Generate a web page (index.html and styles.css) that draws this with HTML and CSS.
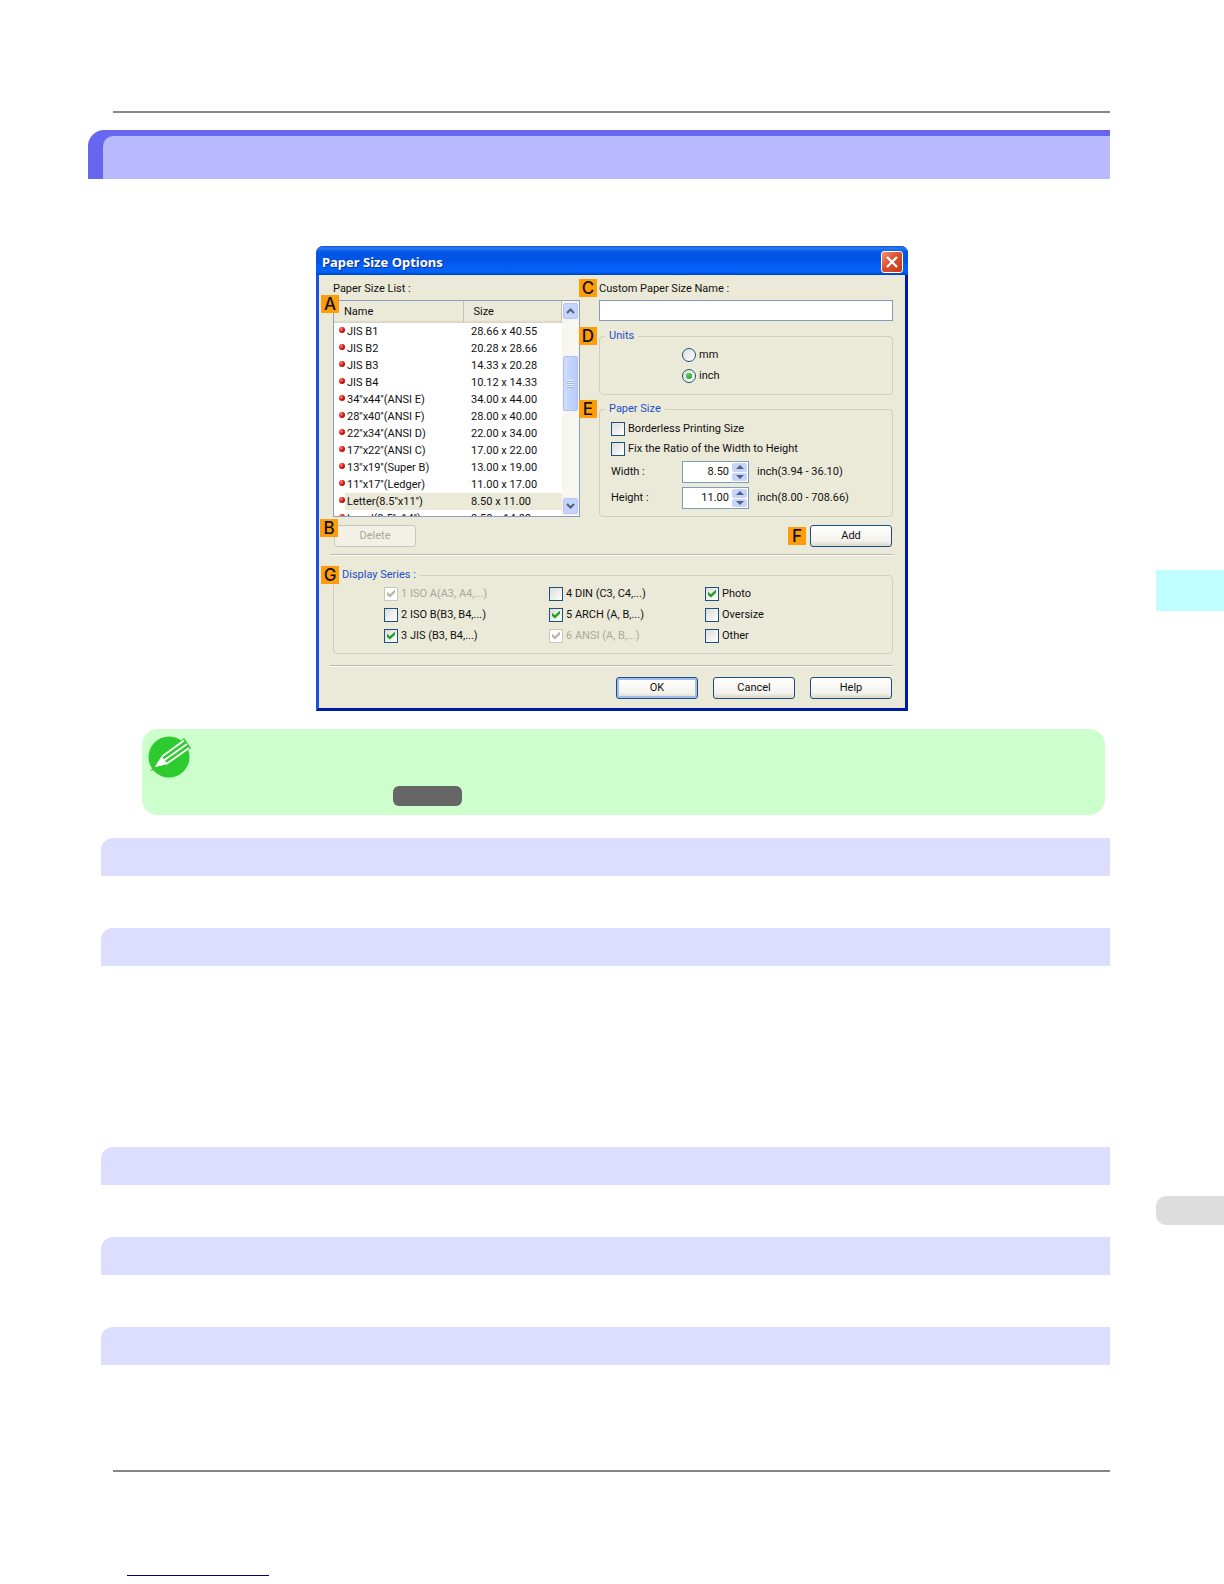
FILE: index.html
```html
<!DOCTYPE html>
<html lang="en">
<head>
<meta charset="utf-8">
<meta name="viewport" content="width=device-width, initial-scale=1">
<title>Paper Size Options</title>
<link rel="stylesheet" href="styles.css">
</head>
<body>
<div class="page">
  <main class="content">
    <hr class="rule">
    <div class="title-bar"><div class="title-inner"></div></div>

    <div class="figure">
      <form class="dialog">
        <header class="caption">
          <h1>Paper Size Options</h1>
          <button type="button" class="close" aria-label="Close">
            <svg viewBox="0 0 20 20" width="20" height="20"><path d="M5 5l10 10M15 5L5 15" stroke="#fff" stroke-width="2.4" fill="none"/></svg>
          </button>
        </header>
        <div class="dialog-body">
          <div class="columns">
            <section class="column">
              <h2 class="label" id="list-label">Paper Size List :</h2>
              <div class="list-box">
                <span class="badge badge-list">A</span>
                <div class="list-view">
                  <table aria-labelledby="list-label">
                    <thead><tr><th>Name</th><th>Size</th></tr></thead>
                    <tbody>
                      <tr><td>JIS B1</td><td>28.66 x 40.55</td></tr>
                      <tr><td>JIS B2</td><td>20.28 x 28.66</td></tr>
                      <tr><td>JIS B3</td><td>14.33 x 20.28</td></tr>
                      <tr><td>JIS B4</td><td>10.12 x 14.33</td></tr>
                      <tr><td>34''x44''(ANSI E)</td><td>34.00 x 44.00</td></tr>
                      <tr><td>28''x40''(ANSI F)</td><td>28.00 x 40.00</td></tr>
                      <tr><td>22''x34''(ANSI D)</td><td>22.00 x 34.00</td></tr>
                      <tr><td>17''x22''(ANSI C)</td><td>17.00 x 22.00</td></tr>
                      <tr><td>13''x19''(Super B)</td><td>13.00 x 19.00</td></tr>
                      <tr><td>11''x17''(Ledger)</td><td>11.00 x 17.00</td></tr>
                      <tr class="selected"><td>Letter(8.5''x11'')</td><td>8.50 x 11.00</td></tr>
                      <tr><td>Legal(8.5''x14'')</td><td>8.50 x 14.00</td></tr>
                    </tbody>
                  </table>
                </div>
                <div class="scrollbar">
                  <button type="button" class="scroll-btn" aria-label="Scroll up"><svg viewBox="0 0 9 6" width="9" height="6"><path d="M1 5l3.500-3.500L8 5" fill="none" stroke="#4d6185" stroke-width="2"/></svg></button>
                  <div class="scroll-thumb"><i></i></div>
                  <button type="button" class="scroll-btn scroll-down" aria-label="Scroll down"><svg viewBox="0 0 9 6" width="9" height="6"><path d="M1 1l3.500 3.500L8 1" fill="none" stroke="#4d6185" stroke-width="2"/></svg></button>
                </div>
              </div>
              <div class="actions">
                <span class="badge badge-list">B</span>
                <button type="button" class="button" disabled>Delete</button>
              </div>
            </section>

            <section class="column">
              <label class="label" for="custom-name"><span class="badge badge-group">C</span>Custom Paper Size Name :</label>
              <input type="text" id="custom-name" class="text-field">
              <fieldset class="group units">
                <legend><span class="badge badge-group">D</span>Units</legend>
                <label class="choice"><input type="radio" name="unit">mm</label>
                <label class="choice"><input type="radio" name="unit" checked>inch</label>
              </fieldset>
              <fieldset class="group paper">
                <legend><span class="badge badge-group">E</span>Paper Size</legend>
                <label class="choice"><input type="checkbox">Borderless Printing Size</label>
                <label class="choice"><input type="checkbox">Fix the Ratio of the Width to Height</label>
                <div class="measure">
                  <label for="width">Width :</label>
                  <span class="spin">
                    <input type="text" id="width" value="8.50">
                    <span class="spin-buttons">
                      <button type="button" aria-label="Increase width"><svg viewBox="0 0 8 4" width="8" height="4"><path d="M0 4l4-4 4 4z" fill="#4d6185"/></svg></button>
                      <button type="button" aria-label="Decrease width"><svg viewBox="0 0 8 4" width="8" height="4"><path d="M0 0l4 4 4-4z" fill="#4d6185"/></svg></button>
                    </span>
                  </span>
                  <span class="range">inch(3.94 - 36.10)</span>
                </div>
                <div class="measure">
                  <label for="height">Height :</label>
                  <span class="spin">
                    <input type="text" id="height" value="11.00">
                    <span class="spin-buttons">
                      <button type="button" aria-label="Increase height"><svg viewBox="0 0 8 4" width="8" height="4"><path d="M0 4l4-4 4 4z" fill="#4d6185"/></svg></button>
                      <button type="button" aria-label="Decrease height"><svg viewBox="0 0 8 4" width="8" height="4"><path d="M0 0l4 4 4-4z" fill="#4d6185"/></svg></button>
                    </span>
                  </span>
                  <span class="range">inch(8.00 - 708.66)</span>
                </div>
              </fieldset>
              <div class="actions actions-end">
                <span class="badge">F</span>
                <button type="button" class="button">Add</button>
              </div>
            </section>
          </div>

          <hr class="divider">
          <fieldset class="group series">
            <legend><span class="badge badge-series">G</span>Display Series :</legend>
            <label class="choice disabled"><input type="checkbox" checked disabled>1 ISO A(A3, A4,...)</label>
            <label class="choice"><input type="checkbox">2 ISO B(B3, B4,...)</label>
            <label class="choice"><input type="checkbox" checked>3 JIS (B3, B4,...)</label>
            <label class="choice"><input type="checkbox">4 DIN (C3, C4,...)</label>
            <label class="choice"><input type="checkbox" checked>5 ARCH (A, B,...)</label>
            <label class="choice disabled"><input type="checkbox" checked disabled>6 ANSI (A, B,...)</label>
            <label class="choice"><input type="checkbox" checked>Photo</label>
            <label class="choice"><input type="checkbox">Oversize</label>
            <label class="choice"><input type="checkbox">Other</label>
          </fieldset>
          <hr class="divider">
          <footer class="dialog-footer">
            <button type="button" class="button default">OK</button>
            <button type="button" class="button">Cancel</button>
            <button type="button" class="button">Help</button>
          </footer>
        </div>
      </form>
    </div>

    <aside class="note">
      <svg class="note-icon" viewBox="0 0 44 44" width="44" height="44">
        <circle cx="21" cy="22" r="20.500" fill="#2ecb2e"/>
        <path d="M2 36L15 21 36 3l7 10L22 31z" fill="#2ecb2e"/>
        <path d="M7 32L13 22l5 7z" fill="#fff"/>
        <path d="M7 32l6-9.500 4.500 7z" fill="#fff"/>
        <path d="M14 21.500L36 5.500M16.500 25L39 9M19 28.500L41 13" stroke="#fff" stroke-width="1.800" fill="none"/>
        <path d="M13.500 22l5.500 7.500" stroke="#fff" stroke-width="1.500"/>
      </svg>
      <div class="reference"></div>
    </aside>

    <div class="section"><div class="section-bar"></div></div>
    <div class="section tall"><div class="section-bar"></div></div>
    <div class="section"><div class="section-bar"></div></div>
    <div class="section"><div class="section-bar"></div></div>
    <div class="section last"><div class="section-bar"></div></div>
    <hr class="rule">
    <a class="footer-link" href="#" aria-label="Back to top"></a>
  </main>

  <div class="side">
    <div class="chapter-tab"></div>
    <div class="page-tab"></div>
  </div>
</div>
</body>
</html>
```
FILE: styles.css
```css
* { box-sizing: border-box; }

body {
  margin: 0;
  background: #fff;
  color: #111;
  font: 11px/16px Roboto, "Liberation Sans", sans-serif;
}

button, input { font: inherit; color: inherit; margin: 0; padding: 0; }
h1, h2, fieldset, legend { margin: 0; padding: 0; border: 0; font: inherit; }

.page {
  display: grid;
  grid-template-columns: minmax(0, 1fr) 68px;
}

.content { padding: 111px 46px 0 88px; }

.rule {
  height: 2px;
  margin: 0 0 0 25px;
  border: 0;
  background: #868686;
}

.title-bar {
  margin-top: 17px;
  padding: 6px 0 0 15px;
  background: #6666ee;
  border-radius: 16px 0 0 0;
}

.title-inner {
  height: 43px;
  background: #b9b9ff;
  border-radius: 10px 0 0 0;
}

.figure { padding: 67px 0 18px 26px; }

/* Dialog window */
.dialog {
  max-width: 592px;
  margin: 0 auto;
  border: solid;
  border-width: 0 3px 3px;
  border-color: #0a3cd8 #001aa8 #001aa8 #1553e0;
  border-radius: 7px 7px 0 0;
  background: #ebe9d8;
}

.caption {
  display: flex;
  align-items: center;
  justify-content: space-between;
  height: 29px;
  margin: 0 -3px;
  padding: 2px 5px 0 6px;
  border-radius: 7px 7px 0 0;
  background: linear-gradient(#0a50d0 0, #2a7bf5 2px, #0358e6 6px, #0054e3 14px, #0362fb 22px, #0261f5 26px, #0042c0 29px);
}

.caption h1 {
  color: #fff;
  font: bold 13px/16px "Noto Sans", "Open Sans", sans-serif;
  text-shadow: 1px 1px 0 #0f2f80;
}

.close {
  display: flex;
  width: 22px;
  height: 22px;
  border: 1px solid #fff;
  border-radius: 3px;
  background: linear-gradient(135deg, #ec9478, #dd5030 45%, #c43a14);
}

.dialog-body { padding: 6px 12px 9px 11px; }

.columns {
  display: grid;
  grid-template-columns: 247fr 294fr;
  gap: 19px;
  padding-left: 3px;
}

.column { min-width: 0; }

.label {
  display: block;
  position: relative;
  margin-bottom: 3px;
}

.badge {
  width: 18px;
  height: 18px;
  background: #ff9c09;
  color: #111;
  font: 500 17px/18px Inter, "Liberation Sans", sans-serif;
  text-align: center;
}

.badge-list, .badge-group, .badge-series { position: absolute; z-index: 1; }
.badge-list { left: -13px; top: -6px; }
.badge-group { left: -20px; top: -2px; }
.badge-series { left: -13px; top: -3px; }
.group .badge-group { left: -21px; top: -3px; }

.list-box {
  position: relative;
  display: flex;
  height: 217px;
  border: 1px solid #8d9dbd;
  background: #fff;
}

.list-view { flex: 1; overflow: hidden; }

table {
  width: 100%;
  table-layout: fixed;
  border-collapse: collapse;
}

th, td {
  padding: 0;
  text-align: left;
  font-weight: normal;
  white-space: nowrap;
}

th {
  height: 22px;
  padding-left: 10px;
  background: linear-gradient(#ebe9d8 19px, #d6d2c2 22px);
  border-right: 1px solid #c6c3b2;
}

th:first-child { width: 129px; }

td { height: 17px; line-height: 17px; padding-left: 8px; }
td:first-child { padding-left: 5px; }

td:first-child::before {
  content: "";
  display: inline-block;
  width: 6px;
  height: 6px;
  margin-right: 2px;
  border-radius: 50%;
  vertical-align: 2px;
  background: radial-gradient(circle at 35% 35%, #ff8c80, #d01010 50%, #a00000);
}

.selected td { background: #ebe9d8; }
.selected td:first-child { background: linear-gradient(to right, #fff 11px, #ebe9d8 11px); }

.scrollbar {
  display: flex;
  flex-direction: column;
  width: 17px;
  padding: 2px 1px;
  background: #f7f6f1;
}

.scroll-btn {
  display: flex;
  align-items: center;
  justify-content: center;
  height: 16px;
  border: 1px solid #b6c6ee;
  border-radius: 2px;
  background: #c6d4fc;
}

.scroll-down { margin-top: auto; }

.scroll-thumb {
  display: flex;
  align-items: center;
  justify-content: center;
  height: 55px;
  margin-top: 37px;
  border: 1px solid #b0c0ee;
  border-radius: 2px;
  background: linear-gradient(to right, #cfdcfe, #b9cbfa);
}

.scroll-thumb i {
  width: 7px;
  height: 8px;
  background: repeating-linear-gradient(#eef4fe 0 1px, #9db2ec 1px 2px);
}

.actions {
  position: relative;
  display: flex;
  align-items: center;
  gap: 4px;
  margin-top: 8px;
  padding: 0 1px;
}

.actions-end { justify-content: flex-end; }

.button {
  width: 82px;
  height: 22px;
  border: 1px solid #1c4f80;
  border-radius: 3px;
  background: linear-gradient(#fff, #f3f2ec 75%, #dad6c8);
}

.button:disabled {
  border-color: #c9c7ba;
  background: #f3f1e7;
  color: #a9a797;
}

.default { box-shadow: inset 0 0 0 2px #a3bdf0; }

.text-field {
  display: block;
  width: 100%;
  height: 21px;
  padding: 0 4px;
  border: 1px solid #7f9db9;
  background: #fff;
}

/* Titled frames: the line runs behind the middle of the legend */
.group {
  position: relative;
  min-width: 0;
  border: 1px solid #d0cfbf;
  border-radius: 4px;
}

.group legend {
  padding: 0 4px;
  color: #1f50c8;
  line-height: 14px;
}

.units { margin-top: 8px; height: 66px; padding: 1px 0 0 82px; }
.units legend { margin-left: -77px; }
.paper { margin-top: 7px; height: 115px; padding: 3px 0 0 11px; }
.paper legend { margin-left: -6px; }

.choice {
  display: flex;
  align-items: center;
  gap: 3px;
  height: 21px;
}

.paper .choice { height: 20px; }

.disabled { color: #aaa899; }

input[type="checkbox"], input[type="radio"] {
  appearance: none;
  display: grid;
  place-items: center;
  flex: none;
  width: 14px;
  height: 14px;
  border: 1px solid #1c5180;
  background: linear-gradient(135deg, #dcdcd7, #fff);
}

input[type="radio"] { border-radius: 50%; }

input[type="radio"]:checked::before {
  content: "";
  width: 6px;
  height: 6px;
  border-radius: 50%;
  background: radial-gradient(circle at 35% 35%, #55d551, #1b961b);
}

input[type="checkbox"]:checked::before {
  content: "";
  width: 8px;
  height: 8px;
  background: #21a121;
  clip-path: polygon(0 28%, 36% 58%, 100% 0, 100% 40%, 36% 100%, 0 68%);
}

input[type="checkbox"]:disabled { border-color: #cac8bb; background: #fff; }
input[type="checkbox"]:disabled::before { background: #b9b7aa; }

.measure {
  display: grid;
  grid-template-columns: 71px 67px 1fr;
  align-items: center;
  height: 26px;
}

.spin {
  display: flex;
  height: 22px;
  padding: 1px;
  border: 1px solid #7f9db9;
  background: #fff;
}

.spin input {
  flex: 1;
  min-width: 0;
  padding-right: 3px;
  border: 0;
  background: none;
  text-align: right;
}

.spin-buttons { display: grid; gap: 1px; width: 15px; }

.spin-buttons button {
  display: flex;
  align-items: center;
  justify-content: center;
  border: 0;
  border-radius: 2px;
  background: #c6d4fc;
}

.range { padding-left: 8px; }

.divider {
  height: 2px;
  margin: 7px 0 0;
  border: 0;
  border-top: 1px solid #bbb8a8;
  background: #fff;
}

.series {
  display: grid;
  grid-template-columns: 165fr 156fr 187fr;
  grid-template-rows: repeat(3, 21px);
  grid-auto-flow: column;
  height: 86px;
  margin: 12px 0 11px 3px;
  padding: 1px 0 0 50px;
}

.series legend { margin-left: -46px; }

.dialog-footer {
  display: flex;
  justify-content: flex-end;
  gap: 15px;
  padding: 10px 1px 0 0;
}

/* Note with a cross-reference */
.note {
  height: 86px;
  margin: 0 5px 23px 54px;
  padding: 6px 6px 0 6px;
  border-radius: 16px;
  background: #ccffcc;
}

.note-icon { display: block; }

.reference {
  width: 69px;
  height: 20px;
  margin: 7px 0 0 245px;
  border-radius: 6px;
  background: #666;
}

.section { min-height: 90px; padding-left: 13px; }
.section.tall { min-height: 219px; }
.section.last { min-height: 143px; }

.section-bar {
  height: 38px;
  border-radius: 12px 0 0 0;
  background: #ddddff;
}

.footer-link {
  display: block;
  width: 142px;
  height: 104px;
  margin: 0 0 8px 39px;
  border-bottom: 1px solid #000080;
}

.side { padding-top: 570px; }

.chapter-tab { height: 41px; background: #c0ffff; }

.page-tab {
  height: 29px;
  margin-top: 585px;
  border-radius: 10px 0 0 10px;
  background: #ddd;
}
```
